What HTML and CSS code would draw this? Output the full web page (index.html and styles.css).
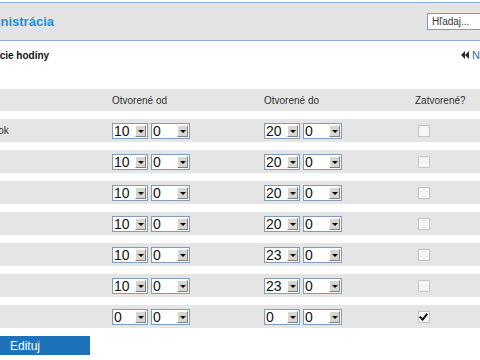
FILE: index.html
```html
<!DOCTYPE html>
<html lang="sk">
<head>
  <meta charset="UTF-8">
  <meta name="viewport" content="width=device-width, initial-scale=1.0">
  <title>Administrácia - Otváracie hodiny</title>
  <link rel="stylesheet" href="styles.css">
</head>
<body>

  <div class="page">

    <!-- Top bar with title and search -->
    <div class="topbar">
      <h1>Administrácia</h1>
      <input class="search" type="text" placeholder="Hľadaj...">
    </div>

    <!-- Section heading -->
    <div class="subhead">
      <h2>Otváracie hodiny</h2>
      <a class="back" href="#">
        <svg class="back-icon" width="8" height="8" viewBox="0 0 8 8">
          <path d="M4 0 L0 4 L4 8 Z M8 0 L4 4 L8 8 Z" fill="#2b2b2b"/>
        </svg>
        Naspäť
      </a>
    </div>

    <!-- Opening hours table -->
    <table class="hours">
      <colgroup>
        <col class="c-day"><col class="c-from"><col class="c-to"><col class="c-closed">
      </colgroup>
      <thead>
        <tr>
          <th>Deň</th>
          <th>Otvorené od</th>
          <th>Otvorené do</th>
          <th>Zatvorené?</th>
        </tr>
      </thead>
      <tbody id="rows"></tbody>
    </table>

    <button class="edit" type="submit">Edituj</button>
  </div>

  <script>
    const days = [
      { name: 'Pondelok', from: 10, to: 20, closed: false },
      { name: 'Utorok', from: 10, to: 20, closed: false },
      { name: 'Streda', from: 10, to: 20, closed: false },
      { name: 'Štvrtok', from: 10, to: 20, closed: false },
      { name: 'Piatok', from: 10, to: 23, closed: false },
      { name: 'Sobota', from: 10, to: 23, closed: false },
      { name: 'Nedeľa', from: 0, to: 0, closed: true }
    ];

    // fake "select" boxes, drawn like the old windows ones
    function selectBox(value, cls) {
      return '<span class="sel ' + cls + '"><span class="val">' + value +
        '</span><span class="arr"></span></span>';
    }

    const tbody = document.getElementById('rows');
    days.forEach((d) => {
      const tr = document.createElement('tr');
      tr.innerHTML =
        '<td class="day">' + d.name + '</td>' +
        '<td>' + selectBox(d.from, 'hour') + selectBox(0, 'min') + '</td>' +
        '<td>' + selectBox(d.to, 'hour') + selectBox(0, 'min') + '</td>' +
        '<td><span class="check' + (d.closed ? ' checked' : '') + '"></span></td>';
      tbody.appendChild(tr);
    });
  </script>

</body>
</html>
```

FILE: styles.css
```css
body {
  font-family: "Liberation Sans", Arial, sans-serif;
  margin: 0;
  padding: 0;
  overflow: hidden;
  background-color: #fff;
  color: #222;
}

/* the page is wider than the window, it starts left of it */
.page {
  width: 600px;
  margin-left: -40px;
  padding-top: 2px;
}

.topbar {
  display: flex;
  align-items: center;
  justify-content: space-between;
  height: 37px;
  padding: 0 8px;
  background-color: #e4e4e4;
  border-top: 1px solid #8fb0d6;
  border-bottom: 1px solid #8fb0d6;
}

.topbar h1 {
  margin: 0;
  font-size: 13px;
  font-weight: bold;
  color: #1b8fd8;
}

.search {
  width: 123px;
  height: 17px;
  box-sizing: border-box;
  margin-right: 2px;
  padding: 0 4px;
  border: 1px solid #7f9db9;
  font-family: "Liberation Sans", sans-serif;
  font-size: 10px;
  color: #333;
}

.search::placeholder {
  color: #333;
}

.subhead {
  display: flex;
  align-items: center;
  justify-content: space-between;
  height: 28px;
  padding: 0 8px;
}

.subhead h2 {
  margin: 0;
  font-size: 10px;
  font-weight: bold;
  color: #111;
}

.back {
  display: flex;
  align-items: center;
  gap: 3px;
  width: 91px;
  font-size: 11px;
  color: #1d6fb5;
  text-decoration: none;
}

/* hours table */
.hours {
  width: 560px;
  table-layout: fixed;
  border-collapse: separate;
  border-spacing: 0 8.3px;
  margin-top: 12px;
  font-size: 10px;
  color: #333;
}

.c-day { width: 144px; }
.c-from { width: 152px; }
.c-to { width: 151px; }

.hours th {
  height: 22px;
  padding: 0 8px;
  text-align: left;
  font-weight: normal;
  background-color: #e5e5e5;
}

.hours td {
  height: 23px;
  padding: 0 8px;
  background-color: #e5e5e5;
}

.hours td.day {
  padding-left: 7px;
}

.sel {
  display: inline-flex;
  align-items: stretch;
  height: 16px;
  box-sizing: border-box;
  margin-right: 3px;
  vertical-align: middle;
  border: 1px solid #7f9db9;
  background-color: #fff;
  font-size: 14px;
  line-height: 14px;
  color: #111;
}

.sel.hour { width: 36px; }
.sel.min { width: 39px; }

.sel .val {
  flex: 1;
  padding-left: 1px;
}

.sel .arr {
  position: relative;
  width: 11px;
  margin: 1px;
  box-sizing: border-box;
  background-color: #d8d5cf;
  border-top: 1px solid #fff;
  border-left: 1px solid #fff;
  border-right: 1px solid #808080;
  border-bottom: 1px solid #808080;
}

.sel .arr::after {
  content: "";
  position: absolute;
  left: 2px;
  top: 4px;
  border-left: 3px solid transparent;
  border-right: 3px solid transparent;
  border-top: 3px solid #000;
}

.check {
  display: inline-block;
  position: relative;
  width: 12px;
  height: 12px;
  box-sizing: border-box;
  margin-left: 3px;
  vertical-align: middle;
  border: 1px solid #c4c4c4;
  background-color: #f6f6f6;
}

.check.checked::after {
  content: "";
  position: absolute;
  left: 2px;
  top: 0px;
  width: 3px;
  height: 6px;
  border-right: 2px solid #111;
  border-bottom: 2px solid #111;
  transform: rotate(40deg);
}

.edit {
  display: block;
  width: 130px;
  height: 19px;
  margin-top: 0;
  padding: 0;
  border: none;
  background-color: #1d72ba;
  color: #fff;
  font-family: "Liberation Sans", sans-serif;
  font-size: 12px;
  cursor: pointer;
}
```
